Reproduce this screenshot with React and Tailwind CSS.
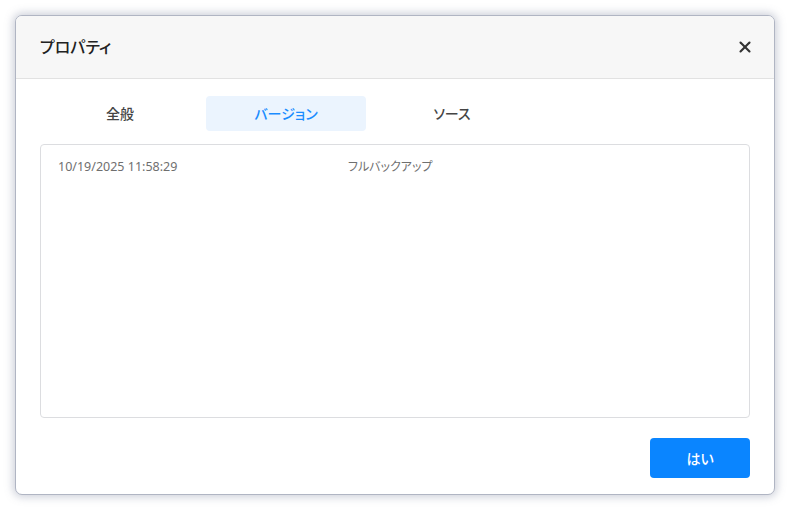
import { X } from 'lucide-react';

const font = { fontFamily: '"Noto Sans", "Noto Sans CJK JP", sans-serif' };

export default function App() {
  const tabs = ['全般', 'バージョン', 'ソース'];
  const active = 1;

  return (
    <div className="w-[790px] h-[510px] bg-white p-[15px]" style={font}>
      <div className="w-[760px] h-[480px] flex flex-col bg-white rounded-[7px] border border-[#b0b5c3] shadow-[0_0_9px_2px_rgba(110,118,145,0.35)] overflow-hidden [font-feature-settings:'palt']">
        {/* Header */}
        <div className="h-[63px] shrink-0 flex items-center justify-between pl-[24px] pr-[20px] bg-[#f7f7f7] border-b border-[#e2e2e2]">
          <span className="text-[16px] font-medium text-[#222]">プロパティ</span>
          <X className="w-[18px] h-[18px] text-[#333]" strokeWidth={2.8} />
        </div>

        {/* Body */}
        <div className="flex-1 flex flex-col px-[24px] pt-[17px] pb-[16px]">
          <div className="flex gap-[6px]">
            {tabs.map((t, i) => (
              <div
                key={t}
                className={
                  i === active
                    ? 'w-[160px] h-[35px] flex items-center justify-center rounded-[4px] bg-[#ebf4fe] text-[14px] font-medium text-[#1a8cff]'
                    : 'w-[160px] h-[35px] flex items-center justify-center text-[14px] font-medium text-[#444]'
                }
              >
                {t}
              </div>
            ))}
          </div>

          <div className="mt-[13px] h-[274px] rounded-[4px] border border-[#dcdde0] px-[17px] pt-[14px]">
            <div className="flex text-[12px] leading-[16px] text-[#6f6f6f]">
              <span className="w-[290px] text-[12.5px]">10/19/2025 11:58:29</span>
              <span>フルバックアップ</span>
            </div>
          </div>

          <div className="mt-[20px] flex justify-end">
            <button className="w-[100px] h-[40px] rounded-[4px] bg-[#0a85ff] text-white text-[14px] font-medium">
              はい
            </button>
          </div>
        </div>
      </div>
    </div>
  );
}
